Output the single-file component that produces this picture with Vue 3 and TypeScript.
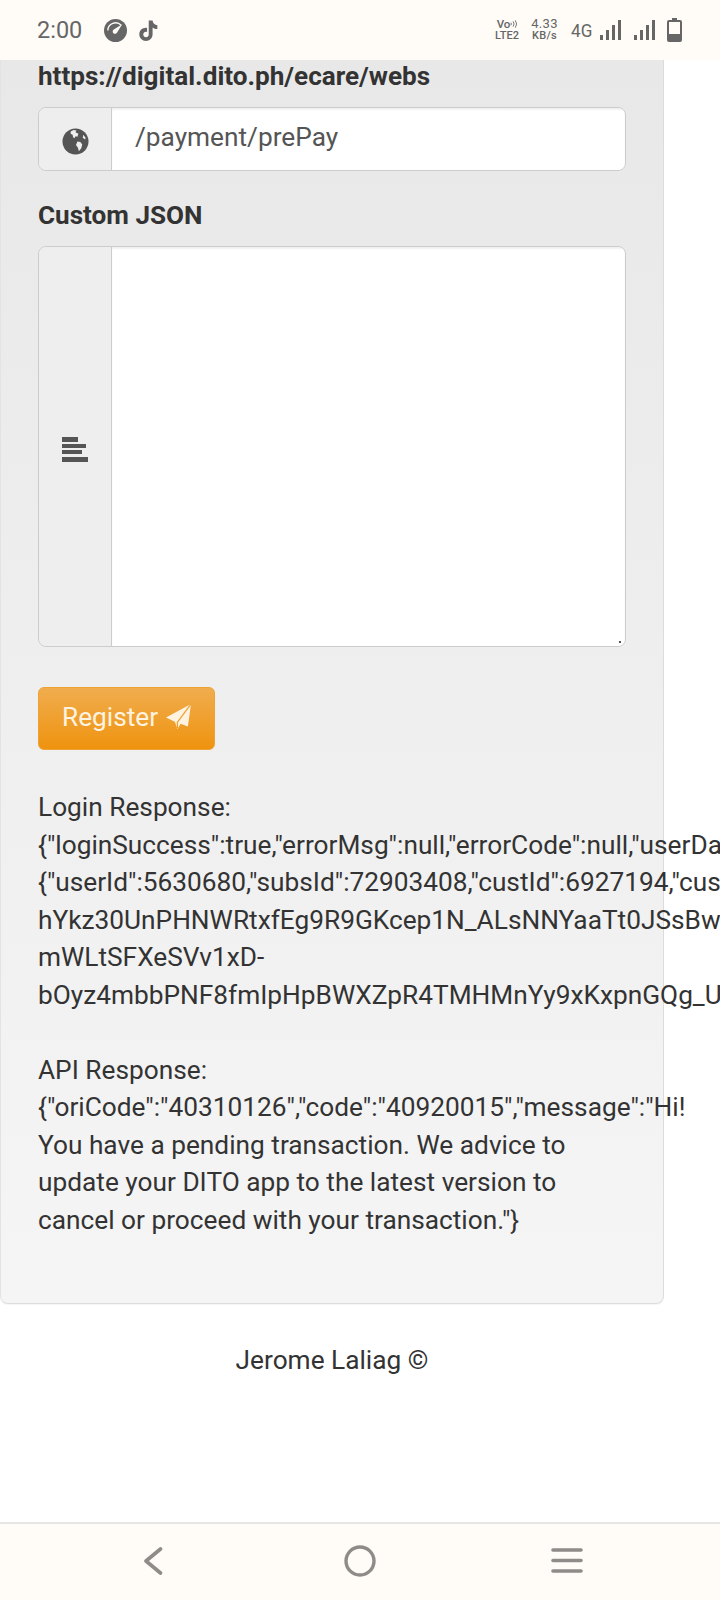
<script setup lang="ts">
const loginLines: string[] = [
  'Login Response:',
  '{"loginSuccess":true,"errorMsg":null,"errorCode":null,"userData":',
  '{"userId":5630680,"subsId":72903408,"custId":6927194,"customerName":"',
  'hYkz30UnPHNWRtxfEg9R9GKcep1N_ALsNNYaaTt0JSsBwQ',
  'mWLtSFXeSVv1xD-',
  'bOyz4mbbPNF8fmIpHpBWXZpR4TMHMnYy9xKxpnGQg_Uk',
]
const apiLines: string[] = [
  'API Response:',
  '{"oriCode":"40310126","code":"40920015","message":"Hi!',
  'You have a pending transaction. We advice to',
  'update your DITO app to the latest version to',
  'cancel or proceed with your transaction."}',
]
</script>

<template>
  <div class="screen">
    <header class="status">
      <div class="status-left">
        <span class="time">2:00</span>
        <svg class="gauge" viewBox="0 0 24 24" aria-hidden="true">
          <circle cx="12" cy="12" r="12" fill="#666" />
          <path d="M4 12a8 8 0 0 1 14-5.300" fill="none" stroke="#fffbf7" stroke-width="1.400" />
          <path d="M19 5.500 10.200 11a2.400 2.400 0 1 0 3.300 3.300z" fill="#fffbf7" />
        </svg>
        <svg class="tiktok" viewBox="0 0 24 24" aria-hidden="true">
          <path d="M12.800 1h4.200c.3 3 2.300 5 5.200 5.200v4.100c-2 0-3.700-.6-5.200-1.700v7.600c0 4.400-3.500 7.300-7.300 7.300C5.800 23.500 2.500 20.300 2.500 16.200c0-4.500 4-7.800 8.500-7v4.300c-2.200-.7-4.200.9-4.200 2.800 0 1.700 1.400 3 3 3 1.800 0 3-1.300 3-3.300z" fill="#666" />
        </svg>
      </div>
      <div class="status-right">
        <span class="stack volte"><b class="vo">Vo<svg class="waves" viewBox="0 0 8 10" aria-hidden="true"><path d="M1 3.500a2.500 2.500 0 0 1 0 3M3.500 2a5 5 0 0 1 0 6M6 .8a7 7 0 0 1 0 8.400" fill="none" stroke="#666" stroke-width="1" /></svg></b><b>LTE2</b></span>
        <span class="stack speed"><b class="big">4.33</b><b>KB/s</b></span>
        <span class="net">4G</span>
        <svg class="signal" viewBox="0 0 21 20" aria-hidden="true">
          <rect x="0" y="15" width="3" height="5" /><rect x="6" y="10" width="3" height="10" />
          <rect x="12" y="5" width="3" height="15" /><rect x="18" y="0" width="3" height="20" />
        </svg>
        <svg class="signal second" viewBox="0 0 21 20" aria-hidden="true">
          <rect x="0" y="15" width="3" height="5" /><rect x="6" y="10" width="3" height="10" />
          <rect x="12" y="5" width="3" height="15" /><rect x="18" y="0" width="3" height="20" />
        </svg>
        <svg class="battery" viewBox="0 0 15 24" aria-hidden="true">
          <path d="M5 0h5v2h3a2 2 0 0 1 2 2v18a2 2 0 0 1-2 2H2a2 2 0 0 1-2-2V4a2 2 0 0 1 2-2h3z" fill="#666" />
          <rect x="2" y="4" width="11" height="12" fill="#fffbf7" />
        </svg>
      </div>
    </header>

    <main class="content">
      <section class="panel">
        <label class="label url">https://digital.dito.ph/ecare/webs</label>
        <div class="group single">
          <span class="addon">
            <svg class="globe" viewBox="0 0 28 28" aria-hidden="true">
              <circle cx="14" cy="14" r="13.500" fill="#555" />
              <path d="M9 3.500l3-1.500 3 .5-1 2 3 1.500-1 3-2-.5-1 2-1.500-1-.5-2.500-2-1zM16 14l3 .5 2 2.500-1 4-2.500 3-1-3.500-2-3zM22 7l2.500 3-.5 2-2.500-2z" fill="#eee" />
            </svg>
          </span>
          <input class="field" value="/payment/prePay" />
        </div>
        <label class="label json">Custom JSON</label>
        <div class="group multi">
          <span class="addon">
            <svg class="align" viewBox="0 0 26 25" aria-hidden="true">
              <rect width="16" height="5" y="0" /><rect width="24" height="4" y="7" />
              <rect width="20" height="4" y="13" /><rect width="26" height="5" y="20" />
            </svg>
          </span>
          <textarea class="field area"></textarea>
        </div>
        <button class="register" type="button">
          <span>Register</span>
          <svg class="plane" viewBox="0 0 24 24" aria-hidden="true">
            <path d="M24 0 0 13l8.500 4L11 24l3-5 7 2.500z" fill="#fdf3e0" />
            <path d="M24 0 11 17.500V23" fill="none" stroke="#ef9f2c" stroke-width="1.200" />
          </svg>
        </button>
        <div class="response">
          <div v-for="line in loginLines" :key="line" class="line">{{ line }}</div>
          <div class="line">&nbsp;</div>
          <div v-for="line in apiLines" :key="line" class="line">{{ line }}</div>
        </div>
      </section>
      <footer class="credit">Jerome Laliag ©</footer>
    </main>

    <nav class="nav">
      <svg class="back" viewBox="0 0 20 28" aria-hidden="true">
        <path d="M17.500 2 3 14l14.500 12" fill="none" stroke="#8f8b89" stroke-width="3.600" stroke-linecap="round" stroke-linejoin="round" />
      </svg>
      <svg class="home" viewBox="0 0 32 32" aria-hidden="true">
        <circle cx="16" cy="16" r="14" fill="none" stroke="#8f8b89" stroke-width="3.400" />
      </svg>
      <svg class="menu" viewBox="0 0 32 25" aria-hidden="true">
        <path d="M2 2h28M2 12.500h28M2 23h28" stroke="#8f8b89" stroke-width="3.600" stroke-linecap="round" />
      </svg>
    </nav>
  </div>
</template>

<style>
html, body { margin: 0; background: #fff; }
</style>

<style scoped>
.screen {
  width: 720px;
  height: 1600px;
  overflow: hidden;
  display: flex;
  flex-direction: column;
  font-family: Roboto, "Liberation Sans", sans-serif;
  color: #333;
  background: #fff;
}
.status {
  height: 60px;
  flex: none;
  background: #fffbf7;
  display: flex;
  justify-content: space-between;
  align-items: center;
  padding: 0 38px 0 37px;
  color: #666;
  box-sizing: border-box;
}
.status-left, .status-right { display: flex; align-items: center; }
.time { font-size: 23.500px; width: 67px; }
.gauge { width: 23px; height: 23px; }
.tiktok { width: 22px; height: 23px; margin-left: 10px; }
.stack { display: flex; flex-direction: column; align-items: center; font-size: 11px; line-height: 12px; }
.stack b { font-weight: 500; }
.vo { display: flex; align-items: center; font-size: 11.500px; }
.waves { width: 7px; height: 10px; }
.volte { width: 26px; }
.speed { width: 27px; margin-left: 11px; letter-spacing: .3px; }
.big { font-size: 13px; font-weight: 400 !important; }
.net { font-size: 19px; margin-left: 12px; width: 22px; transform: scaleX(.9); }
.signal { width: 21px; height: 20px; margin-left: 8px; fill: #666; }
.signal.second { margin-left: 13px; }
.battery { width: 15px; height: 24px; margin-left: 12px; }

.content { flex: 1; min-height: 0; }
.panel {
  width: 664px;
  height: 1244px;
  box-sizing: border-box;
  padding: 0 37px;
  border: 1px solid #dcdcdc;
  border-top: 0;
  border-left-color: #e3e3e3;
  border-radius: 0 0 8px 8px;
  background: linear-gradient(#e8e8e8, #f5f5f5);
  box-shadow: 0 1px 0 #f6f6f6;
}
.label { display: block; font-weight: 700; font-size: 26.100px; color: #333; white-space: nowrap; }
.url { line-height: 32px; }
.json { line-height: 38px; margin-top: 25px; }
.group {
  display: flex;
  width: 588px;
  box-sizing: border-box;
  border: 1px solid #ccc;
  border-radius: 8px;
  overflow: hidden;
  background: #eee;
}
.single { height: 64px; margin-top: 15px; }
.multi { height: 401px; margin-top: 12px; position: relative; }
.addon {
  width: 72px;
  flex: none;
  display: flex;
  align-items: center;
  justify-content: center;
  background: #eee;
  border-right: 1px solid #ccc;
}
.globe { width: 27px; height: 27px; margin-top: 4px; }
.align { width: 26px; height: 25px; fill: #555; margin-top: 6px; }
.field {
  flex: 1;
  min-width: 0;
  border: 0;
  outline: 0;
  background: #fff;
  padding: 0 23px 4px;
  font: 400 26.250px Roboto, sans-serif;
  color: #555;
  box-shadow: inset 0 2px 2px rgba(0, 0, 0, .06);
}
.area { padding: 12px 23px; resize: none; }
.multi::after {
  content: "";
  position: absolute;
  right: 4px;
  bottom: 3px;
  width: 2px;
  height: 2px;
  background: #555;
}
.register {
  display: flex;
  align-items: center;
  gap: 7px;
  width: 177px;
  height: 63px;
  margin-top: 40px;
  padding: 0 0 3px 23px;
  box-sizing: border-box;
  border: 1px solid #eea236;
  border-radius: 6px;
  background: linear-gradient(#f0ad4e, #ef930f);
  color: #fdf3e0;
  font: 400 26.250px Roboto, sans-serif;
  white-space: nowrap;
}
.plane { width: 25px; height: 25px; margin-left: 1px; margin-top: -2px; }
.response { margin-top: 39px; font-size: 26.250px; line-height: 37.500px; color: #333; }
.line { white-space: nowrap; }
.credit { width: 664px; text-align: center; font-size: 26.250px; margin-top: 38px; line-height: 36px; color: #333; }
.nav {
  height: 78px;
  flex: none;
  box-sizing: border-box;
  background: #fffbf7;
  border-top: 2px solid #e6e6e6;
  display: grid;
  grid-template-columns: 201px 207px 1fr;
  align-items: center;
  padding: 0 0 3px 143px;
}
.back { width: 20px; height: 28px; }
.home { width: 32px; height: 32px; }
.menu { width: 32px; height: 25px; }
</style>
